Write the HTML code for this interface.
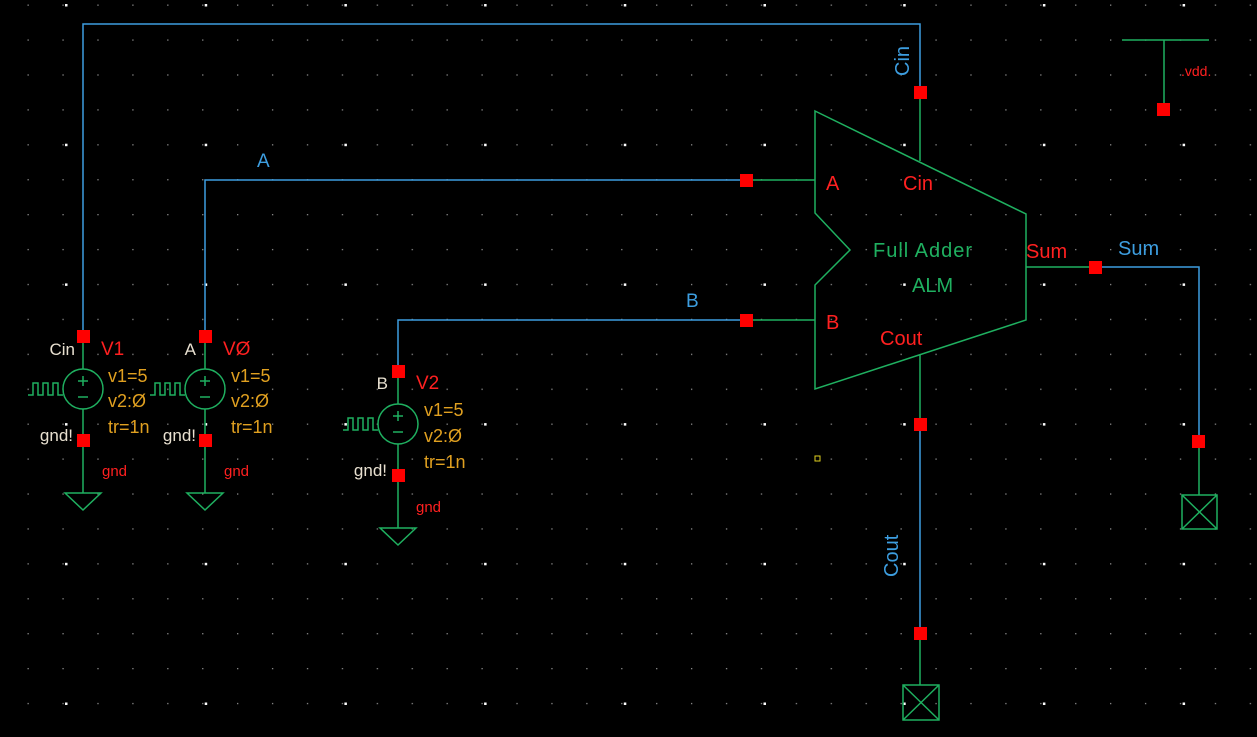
<!DOCTYPE html>
<html><head><meta charset="utf-8"><style>
html,body{margin:0;padding:0;background:#000;width:1257px;height:737px;overflow:hidden}
svg{display:block}
text{font-family:"Liberation Sans",sans-serif}
</style></head><body>
<svg width="1257" height="737" viewBox="0 0 1257 737">
<defs>
<pattern id="g" x="27.5" y="4.5" width="34.92" height="34.92" patternUnits="userSpaceOnUse"><rect width="1.3" height="1.3" fill="#8a8a8a"/></pattern>
<pattern id="gb" x="65" y="4" width="139.7" height="139.7" patternUnits="userSpaceOnUse"><rect width="2.5" height="2.5" fill="#ffffff"/></pattern>
<g id="src">
  <line x1="0" y1="0" x2="0" y2="156" stroke="#1fb060" stroke-width="1.5"/>
  <circle cx="0" cy="52" r="20" fill="#000" stroke="#1fb060" stroke-width="1.5"/>
  <line x1="-5" y1="44" x2="5" y2="44" stroke="#1fb060" stroke-width="1.5"/>
  <line x1="0" y1="39" x2="0" y2="49" stroke="#1fb060" stroke-width="1.5"/>
  <line x1="-5" y1="60" x2="5" y2="60" stroke="#1fb060" stroke-width="1.5"/>
  <polyline points="-55,58 -50,58 -50,46 -45,46 -45,58 -40,58 -40,46 -35,46 -35,58 -30,58 -30,46 -25,46 -25,58 -20,58" fill="none" stroke="#1fb060" stroke-width="1.5"/>
  <polygon points="-18,156 18,156 0,173" fill="none" stroke="#1fb060" stroke-width="1.5"/>
  <rect x="-6" y="-7" width="13" height="13" fill="#ff0000"/>
  <rect x="-6" y="97" width="13" height="13" fill="#ff0000"/>
</g>
</defs>
<rect width="1257" height="737" fill="url(#g)"/>
<rect width="1257" height="737" fill="url(#gb)"/>

<g fill="none" stroke-width="1.5">
<polyline points="83,337 83,24 920,24 920,92" stroke="#3d9ee0"/>
<polyline points="205,337 205,180 746,180" stroke="#3d9ee0"/>
<polyline points="398,372 398,320 746,320" stroke="#3d9ee0"/>
<polyline points="1095,267 1199,267 1199,441" stroke="#3d9ee0"/>
<polyline points="920,424 920,633" stroke="#3d9ee0"/>
<g stroke="#1fb060">
<line x1="746" y1="180" x2="815" y2="180"/>
<line x1="746" y1="320" x2="815" y2="320"/>
<line x1="920" y1="92" x2="920" y2="161"/>
<line x1="1026" y1="267" x2="1095" y2="267"/>
<line x1="920" y1="355" x2="920" y2="424"/>
<line x1="920" y1="633" x2="920" y2="685"/>
<line x1="1199" y1="441" x2="1199" y2="495"/>
<polygon points="815,111 1026,214 1026,320 815,389 815,285 850,250 815,213"/>
<rect x="903" y="685" width="36" height="35"/>
<line x1="903" y1="685" x2="939" y2="720"/><line x1="939" y1="685" x2="903" y2="720"/>
<rect x="1182" y="495" width="35" height="34"/>
<line x1="1182" y1="495" x2="1217" y2="529"/><line x1="1217" y1="495" x2="1182" y2="529"/>
<line x1="1122" y1="40" x2="1209" y2="40"/>
<line x1="1164" y1="40" x2="1164" y2="108"/>
</g>
</g>
<rect x="815" y="456" width="5" height="5" fill="none" stroke="#e0d020" stroke-width="1"/>

<g fill="#ff0000">
<rect x="914" y="86" width="13" height="13"/>
<rect x="740" y="174" width="13" height="13"/>
<rect x="740" y="314" width="13" height="13"/>
<rect x="1089" y="261" width="13" height="13"/>
<rect x="914" y="418" width="13" height="13"/>
<rect x="914" y="627" width="13" height="13"/>
<rect x="1192" y="435" width="13" height="13"/>
<rect x="1157" y="103" width="13" height="13"/>
</g>

<use href="#src" x="83" y="337"/>
<use href="#src" x="205" y="337"/>
<use href="#src" x="398" y="372"/>

<g font-size="18">
<text x="257" y="167" fill="#3d9ee0" font-size="19">A</text>
<text x="686" y="307" fill="#3d9ee0" font-size="19">B</text>
<text x="1118" y="255" fill="#3d9ee0" font-size="20">Sum</text>
<text transform="translate(909,76) rotate(-90)" fill="#3d9ee0" font-size="20">Cin</text>
<text transform="translate(898,577) rotate(-90)" fill="#3d9ee0" font-size="20">Cout</text>

<text x="826" y="190" fill="#ff2020" font-size="20">A</text>
<text x="826" y="329" fill="#ff2020" font-size="20">B</text>
<text x="903" y="190" fill="#ff2020" font-size="20">Cin</text>
<text x="880" y="345" fill="#ff2020" font-size="20">Cout</text>
<text x="1026" y="258" fill="#ff2020" font-size="20">Sum</text>
<text x="873" y="257" fill="#1fb060" font-size="20" letter-spacing="1">Full Adder</text>
<text x="912" y="292" fill="#1fb060" font-size="20">ALM</text>
<text x="1181" y="76" fill="#ff2020" font-size="14">.vdd.</text>

<text x="75" y="355" fill="#e8e0d0" text-anchor="end" font-size="17">Cin</text>
<text x="101" y="355" fill="#ff2020" font-size="19">V1</text>
<text x="108" y="382" fill="#e0a020">v1=5</text>
<text x="108" y="407" fill="#e0a020">v2:Ø</text>
<text x="108" y="433" fill="#e0a020">tr=1n</text>
<text x="73" y="441" fill="#e8e0d0" text-anchor="end" font-size="17">gnd!</text>
<text x="102" y="476" fill="#ff2020" font-size="15">gnd</text>

<text x="196" y="355" fill="#e8e0d0" text-anchor="end" font-size="17">A</text>
<text x="223" y="355" fill="#ff2020" font-size="19">VØ</text>
<text x="231" y="382" fill="#e0a020">v1=5</text>
<text x="231" y="407" fill="#e0a020">v2:Ø</text>
<text x="231" y="433" fill="#e0a020">tr=1n</text>
<text x="196" y="441" fill="#e8e0d0" text-anchor="end" font-size="17">gnd!</text>
<text x="224" y="476" fill="#ff2020" font-size="15">gnd</text>

<text x="388" y="389" fill="#e8e0d0" text-anchor="end" font-size="17">B</text>
<text x="416" y="389" fill="#ff2020" font-size="19">V2</text>
<text x="424" y="416" fill="#e0a020">v1=5</text>
<text x="424" y="442" fill="#e0a020">v2:Ø</text>
<text x="424" y="468" fill="#e0a020">tr=1n</text>
<text x="387" y="476" fill="#e8e0d0" text-anchor="end" font-size="17">gnd!</text>
<text x="416" y="512" fill="#ff2020" font-size="15">gnd</text>
</g>
</svg>
</body></html>
